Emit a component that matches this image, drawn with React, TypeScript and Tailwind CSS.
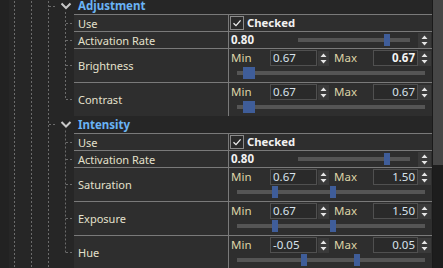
import type { ReactNode } from 'react';

const LINE = 'border-[#7a7a7a]';

function Spin({ w }: { w: string }) {
  return (
    <div className={`flex h-[15px] flex-none items-center justify-center bg-[#3a3a3a] ${w}`}>
      <svg width="7" height="11" viewBox="0 0 7 11">
        <path d="M3.5 0.5 L6.5 4 H0.5Z M3.5 10.5 L6.5 7 H0.5Z" fill="#e6e6e6" />
      </svg>
    </div>
  );
}

function Track({ thumbs, wide }: { thumbs: number[]; wide?: boolean }) {
  return (
    <div className="relative h-[4px] w-full bg-[#555555]">
      {thumbs.map((x) => (
        <div
          key={x}
          className={`absolute top-[-4px] h-[12px] bg-[#3f5d99] ${wide ? 'w-[12px]' : 'w-[6px]'}`}
          style={{ left: x }}
        />
      ))}
    </div>
  );
}

function Row({ label, tall, last, children }: { label: string; tall?: boolean; last?: boolean; children: ReactNode }) {
  const h = tall ? (last ? 'h-[33px]' : 'h-[34px]') : 'h-[17px]';
  return (
    <div className={`flex bg-[#2e2e2e] ${h} ${last ? '' : `border-b ${LINE}`}`}>
      <div className={`flex w-[155px] flex-none items-center border-r pl-[4px] text-[11px] text-[#e4e0cc] ${LINE}`}>
        {label}
      </div>
      <div className="min-w-0 flex-1">{children}</div>
    </div>
  );
}

function Header({ title }: { title: string }) {
  return (
    <div className={`flex h-[18px] items-center border-b bg-[#262626] pl-[4px] pt-[1px] text-[11.5px] font-bold text-[#6ab4f5] ${LINE}`}>
      {title}
    </div>
  );
}

function UseRow() {
  return (
    <Row label="Use">
      <div className="flex h-full items-center pl-[1px]">
        <div className="flex h-[14px] w-[14px] items-center justify-center border border-[#8a8a8a] bg-[#2a2a2a]">
          <svg width="10" height="10" viewBox="0 0 10 10">
            <path d="M1.5 5.2 L4 7.6 L8.6 2.4" fill="none" stroke="#f0f0f0" strokeWidth="1.3" />
          </svg>
        </div>
        <span className="ml-[3px] text-[11.3px] font-bold text-[#f2f2f2]">Checked</span>
      </div>
    </Row>
  );
}

function RateRow() {
  return (
    <Row label="Activation Rate">
      <div className="flex h-full items-center">
        <span className="w-[69px] flex-none pl-[2px] text-[11.5px] font-bold text-[#f2f2f2]">0.80</span>
        <div className="w-[112px] flex-none">
          <Track thumbs={[86]} />
        </div>
        <div className="ml-auto mr-[1px]">
          <Spin w="w-[13px]" />
        </div>
      </div>
    </Row>
  );
}

function Box({ value, w, right, bold }: { value: string; w: string; right?: boolean; bold?: boolean }) {
  return (
    <div
      className={`flex h-[16px] flex-none items-center border border-[#505050] bg-[#2a2a2a] px-[2px] text-[11.5px] ${w} ${
        right ? 'justify-end' : ''
      } ${bold ? 'font-bold text-[#f4f4f4]' : 'text-[#d8e2ec]'}`}
    >
      {value}
    </div>
  );
}

function ParamRow({
  label,
  min,
  max,
  thumbs,
  wide,
  boldMax,
  last,
}: {
  label: string;
  min: string;
  max: string;
  thumbs: number[];
  wide?: boolean;
  boldMax?: boolean;
  last?: boolean;
}) {
  return (
    <Row label={label} tall last={last}>
      <div className="flex items-center pt-[1px]">
        <span className="w-[41px] flex-none pl-[2px] text-[11.5px] text-[#ddd3a6]">Min</span>
        <Box value={min} w="w-[47px]" />
        <div className="ml-[1px]">
          <Spin w="w-[11px]" />
        </div>
        <span className="w-[44px] flex-none pl-[5px] text-[11.5px] text-[#ddd3a6]">Max</span>
        <Box value={max} w="w-[45px]" right bold={boldMax} />
        <Spin w="w-[13px]" />
      </div>
      <div className="flex h-[13px] items-center pl-[8px] pr-[7px]">
        <Track thumbs={thumbs} wide={wide} />
      </div>
    </Row>
  );
}

function Tree() {
  const dash = { stroke: '#6b6b6b', strokeWidth: 1, strokeDasharray: '2 2' };
  const sections = [
    { head: 6, kids: [23, 40, 65, 99] },
    { head: 124.5, kids: [142, 159, 184, 218, 252] },
  ];
  return (
    <svg width="74" height="271" viewBox="0 -3 74 271" className="flex-none">
      <rect x="0" y="-3" width="9" height="271" fill="#222222" />
      {[14.5, 31.5, 48.5].map((x) => (
        <line key={x} x1={x} y1={-3} x2={x} y2={268} {...dash} />
      ))}
      {sections.map((s) => (
        <g key={s.head}>
          <line x1={49} y1={Math.floor(s.head) + 0.5} x2={57} y2={Math.floor(s.head) + 0.5} {...dash} />
          <polyline
            points={`61.5,${s.head - 2.5} 66,${s.head + 2} 70.5,${s.head - 2.5}`}
            fill="none"
            stroke="#c8c8c8"
            strokeWidth="2"
          />
          <line x1={65.5} y1={s.head + 6} x2={65.5} y2={s.kids[s.kids.length - 1] + 0.5} {...dash} />
          {s.kids.map((k) => (
            <line key={k} x1={66} y1={k + 0.5} x2={72} y2={k + 0.5} {...dash} />
          ))}
        </g>
      ))}
    </svg>
  );
}

export default function App() {
  return (
    <div className="flex h-[268px] w-[443px] overflow-hidden bg-[#262626] font-['Noto_Sans',sans-serif] leading-none">
      <div className="mt-[-3px] flex min-w-0 flex-1">
        <Tree />
        <div className="min-w-0 flex-1">
          <Header title="Adjustment" />
          <UseRow />
          <RateRow />
          <ParamRow label="Brightness" min="0.67" max="0.67" thumbs={[6]} wide boldMax />
          <ParamRow label="Contrast" min="0.67" max="0.67" thumbs={[6]} wide last />
          <Header title="Intensity" />
          <UseRow />
          <RateRow />
          <ParamRow label="Saturation" min="0.67" max="1.50" thumbs={[35, 93]} />
          <ParamRow label="Exposure" min="0.67" max="1.50" thumbs={[35, 93]} />
          <ParamRow label="Hue" min="-0.05" max="0.05" thumbs={[64, 117]} />
        </div>
      </div>
      <div className="w-[11px] flex-none border-l border-[#1a1a1a] bg-[#1d1d1d]">
        <div className="h-[165px] bg-[#464646]" />
      </div>
    </div>
  );
}
